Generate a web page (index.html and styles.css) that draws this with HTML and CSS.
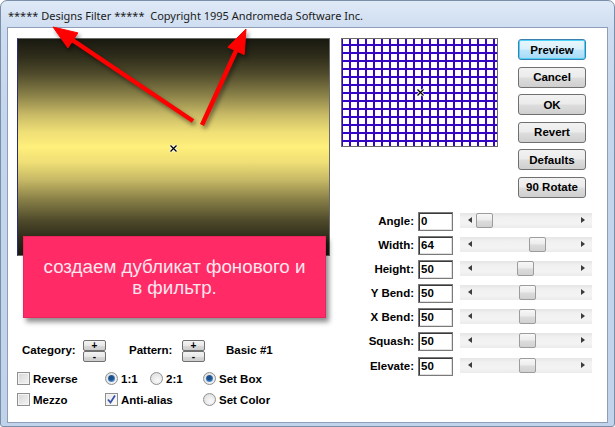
FILE: index.html
```html
<!DOCTYPE html>
<html>
<head>
<meta charset="utf-8">
<link rel="stylesheet" href="styles.css">
</head>
<body>
<div class="window">
  <div class="titlebar">***** Designs Filter *****&nbsp; Copyright 1995 Andromeda Software Inc.</div>
  <div class="client">
    <div class="left">
      <div class="preview">
        <svg class="cursor cursor-preview" width="9" height="9" viewBox="0 0 9 9"><path d="M1.5 1.5L7.5 7.5M7.5 1.5L1.5 7.5" stroke="#fff" stroke-width="3"/><path d="M1.5 1.5L7.5 7.5M7.5 1.5L1.5 7.5" stroke="#000" stroke-width="1.3"/></svg>
      </div>
      <div class="spin-row">
        <span class="lbl cat">Category:</span>
        <div class="spin"><button class="sbtn">+</button><button class="sbtn">-</button></div>
        <span class="lbl pat">Pattern:</span>
        <div class="spin"><button class="sbtn">+</button><button class="sbtn">-</button></div>
        <span class="lbl basic">Basic #1</span>
      </div>
      <div class="opts">
        <div class="opt"><span class="check"></span>Reverse</div>
        <div class="opt"><span class="radio on"></span>1:1</div>
        <div class="opt"><span class="radio"></span>2:1</div>
        <div class="opt"><span class="radio on"></span>Set Box</div>
        <div class="opt"><span class="check"></span>Mezzo</div>
        <div class="opt span2"><span class="check on"><svg width="11" height="11" viewBox="0 0 11 11"><path d="M2 5.5L4.5 8.5L9 1.5" fill="none" stroke="#3a52a8" stroke-width="1.8"/></svg></span>Anti-alias</div>
        <div class="opt"><span class="radio"></span>Set Color</div>
      </div>
    </div>
    <div class="right">
      <div class="top">
        <div class="grid">
          <svg class="cursor cursor-grid" width="9" height="9" viewBox="0 0 9 9"><path d="M1.5 1.5L7.5 7.5M7.5 1.5L1.5 7.5" stroke="#fff" stroke-width="3"/><path d="M1.5 1.5L7.5 7.5M7.5 1.5L1.5 7.5" stroke="#000" stroke-width="1.3"/></svg>
        </div>
        <div class="buttons">
          <button class="btn default">Preview</button>
          <button class="btn">Cancel</button>
          <button class="btn">OK</button>
          <button class="btn">Revert</button>
          <button class="btn">Defaults</button>
          <button class="btn">90 Rotate</button>
        </div>
      </div>
      <div class="sliders">
        <div class="row"><span class="rlabel">Angle:</span><span class="field">0</span><div class="scroll"><span class="arr l"></span><span class="arr r"></span><span class="thumb" style="--x:16px"></span></div></div>
        <div class="row"><span class="rlabel">Width:</span><span class="field">64</span><div class="scroll"><span class="arr l"></span><span class="arr r"></span><span class="thumb" style="--x:69px"></span></div></div>
        <div class="row"><span class="rlabel">Height:</span><span class="field">50</span><div class="scroll"><span class="arr l"></span><span class="arr r"></span><span class="thumb" style="--x:57px"></span></div></div>
        <div class="row"><span class="rlabel">Y Bend:</span><span class="field">50</span><div class="scroll"><span class="arr l"></span><span class="arr r"></span><span class="thumb" style="--x:59px"></span></div></div>
        <div class="row"><span class="rlabel">X Bend:</span><span class="field">50</span><div class="scroll"><span class="arr l"></span><span class="arr r"></span><span class="thumb" style="--x:59px"></span></div></div>
        <div class="row"><span class="rlabel">Squash:</span><span class="field">50</span><div class="scroll"><span class="arr l"></span><span class="arr r"></span><span class="thumb" style="--x:59px"></span></div></div>
        <div class="row"><span class="rlabel">Elevate:</span><span class="field">50</span><div class="scroll"><span class="arr l"></span><span class="arr r"></span><span class="thumb" style="--x:59px"></span></div></div>
      </div>
    </div>
  </div>
  <div class="note"><p>создаем дубликат фонового и<br>в фильтр.</p></div>
  <svg class="arrows" width="615" height="427" viewBox="0 0 615 427">
    <g fill="#ff0000" stroke="#ff0000">
      <line x1="193" y1="121" x2="72.9" y2="40.4" stroke-width="4.5"/>
      <polygon points="53,27 77.9,32.9 67.9,47.9" stroke-width="1"/>
      <line x1="202" y1="125" x2="236" y2="50.8" stroke-width="4.5"/>
      <polygon points="246,29 244.2,54.6 227.8,47.1" stroke-width="1"/>
    </g>
  </svg>
</div>
</body>
</html>
```
FILE: styles.css
```css
html, body { margin: 0; padding: 0; background: #fff; }

.window {
  position: relative;
  width: 615px;
  height: 427px;
  box-sizing: border-box;
  border: 1px solid #7b8ea8;
  border-radius: 7px 7px 3px 3px;
  background: linear-gradient(#dfeaf7, #cddcf0 30px, #c4d6ec 120px, #c0d3ea);
  padding: 0 6px 3px 6px;
  font-family: "Liberation Sans", Arial, sans-serif;
  overflow: hidden;
}

.titlebar {
  height: 26px;
  line-height: 29px;
  padding-left: 1px;
  font-family: "Noto Sans", "Liberation Sans", sans-serif;
  font-size: 11px;
  color: #1b1b1b;
  white-space: nowrap;
}

.client {
  height: 396px;
  box-sizing: border-box;
  border: 1px solid #8d9eb6;
  background: #fff;
  display: flex;
  padding: 10px 0 0 9px;
  column-gap: 11px;
  font-weight: bold;
  font-size: 11.5px;
  color: #000;
}

.left {
  width: 313px;
  display: flex;
  flex-direction: column;
}

.preview {
  position: relative;
  width: 313px;
  height: 218px;
  box-sizing: border-box;
  border: 1px solid #6b6b6b;
  border-left-color: #2b2b7e;
  background: linear-gradient(#191910 0%, #2e2c1a 8%, #4f4a2b 16%, #8a8148 26%, #c8ba66 35%, #efdf76 43%, #ffef7b 50%, #efdf76 57%, #c8ba66 65%, #8a8148 74%, #4f4a2b 84%, #2e2c1a 92%, #191910 100%);
}

.cursor { position: absolute; }
.cursor-preview { left: 151px; top: 105px; }
.cursor-grid { left: 74px; top: 49px; }

.spin-row {
  display: flex;
  align-items: center;
  height: 22px;
  margin-top: 84px;
}
.lbl { line-height: 14px; margin-top: -3px; }
.cat { width: 66px; padding-left: 5px; box-sizing: border-box; }
.pat { width: 53px; margin-left: 23px; }
.basic { margin-left: 21px; }

.spin { display: flex; flex-direction: column; width: 23px; }
.sbtn {
  width: 23px;
  height: 11px;
  box-sizing: border-box;
  padding: 0;
  border: 1px solid #707070;
  border-radius: 2px;
  background: linear-gradient(#f4f4f4, #e8e8e8 50%, #d9d9d9 51%, #cdcdcd);
  font: bold 10px/8px "Liberation Sans", Arial, sans-serif;
  color: #000;
}

.opts {
  margin-top: 6px;
  display: grid;
  grid-template-columns: 88px 45px 53px auto;
  grid-auto-rows: 21px;
}
.opt { display: flex; align-items: center; white-space: nowrap; }
.span2 { grid-column: span 2; }

.check {
  width: 13px;
  height: 13px;
  box-sizing: border-box;
  border: 1px solid #8e8f8f;
  background: linear-gradient(135deg, #d6d6d6, #f4f4f4);
  box-shadow: inset 0 0 0 1px #f4f4f4;
  margin-right: 3px;
  display: flex;
  align-items: center;
  justify-content: center;
}
.check.on { background: linear-gradient(135deg, #e8e8e8, #fdfdfd); }
.check svg { display: block; }

.radio {
  position: relative;
  width: 13px;
  height: 13px;
  box-sizing: border-box;
  border: 1px solid #8e8f8f;
  border-radius: 50%;
  background: radial-gradient(circle at 60% 65%, #fafafa, #d8d8d8);
  margin-right: 3px;
}
.radio.on::after {
  content: "";
  position: absolute;
  left: 2px;
  top: 2px;
  width: 7px;
  height: 7px;
  border-radius: 50%;
  background: radial-gradient(circle at 45% 40%, #1d4f88 35%, #4b8fd4 70%, #9cc8ef);
}

.right {
  display: flex;
  flex-direction: column;
}

.top { display: flex; column-gap: 20px; }

.grid {
  position: relative;
  width: 157px;
  height: 109px;
  box-sizing: border-box;
  border: 1px solid #6b6b6b;
  background-color: #fff;
  background-image:
    linear-gradient(90deg, #3604c4 0 2px, transparent 2px 8px),
    linear-gradient(180deg, #3604c4 0 2px, transparent 2px 8px);
  background-size: 8px 8px, 8px 8px;
  background-position: 7px 0, 0 5px;
}

.buttons {
  display: flex;
  flex-direction: column;
  row-gap: 6.5px;
  margin-top: 1px;
}
.btn {
  width: 68px;
  height: 21px;
  box-sizing: border-box;
  padding: 0;
  border: 1px solid #707070;
  border-radius: 3px;
  background: linear-gradient(#f2f2f2, #ebebeb 48%, #dddddd 52%, #cfcfcf);
  font: bold 11.5px "Liberation Sans", Arial, sans-serif;
  color: #000;
}
.btn.default {
  border-color: #3c7fb1;
  box-shadow: inset 0 0 0 1px #4ad2f8;
  background: linear-gradient(#eaf6fd, #d9f0fc 48%, #bee6fd 52%, #a7d9f5);
}

.sliders {
  margin-top: 14.5px;
  display: flex;
  flex-direction: column;
}
.row {
  display: flex;
  align-items: flex-start;
  height: 24.1px;
}
.rlabel {
  width: 73px;
  text-align: right;
  line-height: 19px;
  margin-right: 4px;
}
.field {
  width: 35px;
  height: 19px;
  box-sizing: border-box;
  border: 1px solid #7a7a7a;
  box-shadow: inset 1px 1px 0 #3a3a3a, inset -1px -1px 0 #e0e0e0;
  padding-left: 2px;
  line-height: 17px;
}
.scroll {
  position: relative;
  width: 132px;
  height: 15px;
  margin-left: 7px;
  margin-top: 1px;
  background: linear-gradient(#e6e6e6, #f1f1f1 30%, #f3f3f3 70%, #ebebeb);
}
.arr {
  position: absolute;
  top: 4px;
  width: 0;
  height: 0;
  border-top: 3.5px solid transparent;
  border-bottom: 3.5px solid transparent;
}
.arr.l { left: 8px; border-right: 4px solid #3c3c3c; }
.arr.r { right: 7px; border-left: 4px solid #3c3c3c; }
.thumb {
  position: absolute;
  left: var(--x);
  top: 0;
  width: 17px;
  height: 15px;
  box-sizing: border-box;
  border: 1px solid #9c9c9c;
  border-radius: 2px;
  background: linear-gradient(#f7f7f7, #ececec 48%, #dcdcdc 52%, #d2d2d2);
}

.note {
  position: absolute;
  left: 22px;
  top: 235px;
  width: 303px;
  height: 82px;
  box-sizing: border-box;
  border: 1px solid #e8265d;
  background: #ff2a66;
  box-shadow: 3px 4px 5px rgba(0, 0, 0, 0.45);
  color: #fde6ee;
  font-family: "Liberation Sans", Arial, sans-serif;
  font-size: 18.8px;
  line-height: 21.5px;
  text-align: center;
  display: flex;
  align-items: center;
  justify-content: center;
}
.note p { margin: 0; }

.arrows {
  position: absolute;
  left: -1px;
  top: -1px;
  filter: drop-shadow(2px 3px 2px rgba(0, 0, 0, 0.45));
}
```
